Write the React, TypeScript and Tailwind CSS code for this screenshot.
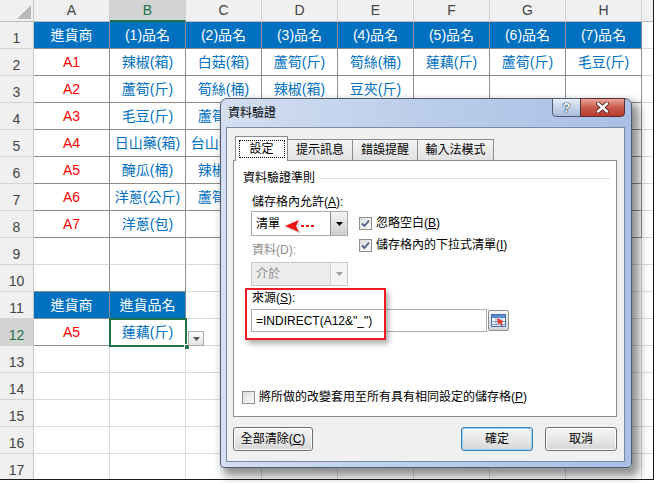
import React from "react";

const LETTERS = ["A", "B", "C", "D", "E", "F", "G", "H"];

const DATA: Record<number, string[]> = {
  1: ["進貨商", "(1)品名", "(2)品名", "(3)品名", "(4)品名", "(5)品名", "(6)品名", "(7)品名"],
  2: ["A1", "辣椒(箱)", "白菇(箱)", "蘆筍(斤)", "筍絲(桶)", "蓮藕(斤)", "蘆筍(斤)", "毛豆(斤)"],
  3: ["A2", "蘆筍(斤)", "筍絲(桶)", "辣椒(箱)", "豆夾(斤)"],
  4: ["A3", "毛豆(斤)", "蘆筍(斤)"],
  5: ["A4", "日山藥(箱)", "台山藥(箱)"],
  6: ["A5", "醃瓜(桶)", "辣椒(箱)"],
  7: ["A6", "洋蔥(公斤)", "蘆筍(斤)"],
  8: ["A7", "洋蔥(包)"],
  11: ["進貨商", "進貨品名"],
  12: ["A5", "蓮藕(斤)"],
};

const inTable = (r: number, c: number) =>
  (r >= 1 && r <= 8 && c >= 0 && c <= 7) || ((r === 11 || r === 12) && c >= 0 && c <= 1);
const sideOnly = (r: number, c: number) => (r === 9 || r === 10) && c >= 0 && c <= 1;
const isHead = (r: number, c: number) => r === 1 || (r === 11 && c <= 1);

function Sheet() {
  const rows = Array.from({ length: 17 }, (_, i) => i + 1);
  return (
    <div className="flex flex-col font-['Liberation_Sans','Noto_Sans_CJK_TC',sans-serif] text-[14px]">
      <div className="flex h-[22px] shrink-0">
        <div className="relative w-[34px] shrink-0 bg-[#f0f0f0] border-r border-b border-r-[#c6c6c6] border-b-[#bdbdbd]">
          <div className="absolute right-[2px] bottom-[2px] w-0 h-0 border-l-[14px] border-l-transparent border-b-[14px] border-b-[#b9b9b9]" />
        </div>
        {LETTERS.map((l, i) => (
          <div
            key={l}
            className={`w-[76px] shrink-0 flex items-center justify-center border-r border-r-[#d0d0d0] ${
              i === 1
                ? "bg-[#d3d3d3] text-[#217346] border-b-2 border-b-[#217346]"
                : "bg-[#f0f0f0] text-[#444] border-b border-b-[#bdbdbd]"
            }`}
          >
            {l}
          </div>
        ))}
        <div className="flex-1 bg-[#f0f0f0] border-b border-b-[#bdbdbd]" />
      </div>
      {rows.map((r) => (
        <div key={r} className="flex h-[27px] shrink-0">
          <div
            className={`w-[34px] shrink-0 flex items-end justify-center pb-[2px] leading-[16px] border-r border-b border-r-[#c6c6c6] border-b-[#d4d4d4] ${
              r === 12 ? "bg-[#d3d3d3] text-[#217346]" : "bg-[#f0f0f0] text-[#444]"
            }`}
          >
            {r}
          </div>
          {LETTERS.map((_, c) => {
            const rDark = inTable(r, c) || inTable(r, c + 1) || sideOnly(r, c);
            const bDark = inTable(r, c) || inTable(r + 1, c);
            const text = DATA[r]?.[c] ?? "";
            const head = inTable(r, c) && isHead(r, c);
            const color = head ? "bg-[#0070c0] text-white" : c === 0 ? "text-[#ff0000]" : "text-[#0070c0]";
            return (
              <div
                key={c}
                className={`w-[76px] shrink-0 flex items-center justify-center whitespace-nowrap overflow-hidden border-r border-b ${
                  rDark ? "border-r-[#8c8c8c]" : "border-r-[#dadada]"
                } ${bDark ? "border-b-[#8c8c8c]" : "border-b-[#dadada]"} ${color}`}
              >
                {text}
              </div>
            );
          })}
          <div className="flex-1 border-b border-b-[#dadada]" />
        </div>
      ))}
    </div>
  );
}

function CheckBox({ checked }: { checked?: boolean }) {
  return (
    <span className="w-[13px] h-[13px] shrink-0 border border-[#8e8f8f] bg-gradient-to-br from-[#dcdcdc] to-[#fbfbfb] flex items-center justify-center">
      {checked && (
        <svg width="9" height="9" viewBox="0 0 9 9">
          <path d="M1 4.5 L3.5 7 L8 1.5" fill="none" stroke="#4a5f86" strokeWidth="1.8" />
        </svg>
      )}
    </span>
  );
}

function DownTri({ color }: { color: string }) {
  return (
    <svg width="7" height="4" viewBox="0 0 7 4">
      <path d="M0 0 H7 L3.5 4 Z" fill={color} />
    </svg>
  );
}

function Btn({ children, cls, def }: { children: React.ReactNode; cls: string; def?: boolean }) {
  return (
    <div
      className={`${cls} h-full rounded-[3px] border flex items-center justify-center bg-gradient-to-b from-[#f6f6f6] via-[#e8e8e8] to-[#d6d6d6] ${
        def ? "border-[#3c7fb1] shadow-[inset_0_0_0_1px_#8fd3f5]" : "border-[#707070] shadow-[inset_0_0_0_1px_#fcfcfc]"
      }`}
    >
      {children}
    </div>
  );
}

function Panel() {
  return (
    <div className="relative h-[257px] bg-white border border-[#898c95] flex flex-col">
      <div className="mt-[9px] h-[16px] flex items-center">
        <span className="ml-[9px] leading-[16px]">資料驗證準則</span>
        <span className="flex-1 ml-[4px] mr-[6px] h-px bg-[#d5dfe5]" />
      </div>
      <div className="mt-[8px] h-[16px] leading-[16px] ml-[18px]">
        儲存格內允許(<span className="underline">A</span>):
      </div>
      <div className="flex">
        <div className="ml-[17px] w-[97px] flex flex-col">
          <div className="relative mt-[1px] h-[25px] border border-[#a6abb3] bg-white flex">
            <div className="flex-1 flex items-center pl-[4px]">清單</div>
            <div className="w-[17px] h-full border-l border-[#8e8f8f] bg-gradient-to-b from-[#f4f4f4] to-[#cfcfcf] flex items-center justify-center">
              <DownTri color="#000" />
            </div>
            <svg className="absolute left-[32px] top-[6px]" width="32" height="16" viewBox="0 0 32 16">
              <path d="M3 10 L17 4 L14 10 L17 16 Z" fill="#000" opacity="0.15" />
              <path d="M1 8 L15 2 L12 8 L15 14 Z" fill="#ee1111" />
              <rect x="17" y="7" width="3" height="2" fill="#ee1111" />
              <rect x="22" y="7" width="3" height="2" fill="#ee1111" />
              <rect x="27" y="7" width="3" height="2" fill="#ee1111" />
            </svg>
          </div>
          <div className="mt-[6px] h-[16px] leading-[16px] ml-[1px] text-[#8d8d8d]">資料(D):</div>
          <div className="mt-[4px] h-[24px] border border-[#c8c8c8] bg-[#ececec] flex">
            <div className="flex-1 flex items-center pl-[4px] text-[#8d8d8d]">介於</div>
            <div className="w-[17px] h-full border-l border-[#d0d0d0] bg-[#f4f4f4] flex items-center justify-center">
              <DownTri color="#a0a0a0" />
            </div>
          </div>
        </div>
        <div className="ml-[11px] pt-[5px] flex flex-col gap-[6px]">
          <div className="h-[16px] flex items-center gap-[4px]">
            <CheckBox checked />
            <span className="leading-[16px]">
              忽略空白(<span className="underline">B</span>)
            </span>
          </div>
          <div className="h-[16px] flex items-center gap-[4px]">
            <CheckBox checked />
            <span className="leading-[16px]">
              儲存格內的下拉式清單(<span className="underline">I</span>)
            </span>
          </div>
        </div>
      </div>
      <div className="mt-[4px] h-[16px] leading-[16px] ml-[18px]">
        來源(<span className="underline">S</span>):
      </div>
      <div className="mt-[3px] flex">
        <div className="ml-[17px] w-[236px] h-[23px] border border-[#abadb3] bg-white flex items-center pl-[4px]">
          =INDIRECT(A12&amp;"_")
        </div>
        <div className="ml-[1px] mt-[1px] w-[21px] h-[21px] rounded-[2px] border border-[#8e8f8f] bg-gradient-to-b from-[#f6f6f6] to-[#d4d4d4] flex items-center justify-center">
          <svg width="15" height="13" viewBox="0 0 15 13">
            <rect x="0.5" y="0.5" width="14" height="12" fill="#eef3fb" stroke="#4a72b0" />
            <rect x="1" y="1" width="13" height="3" fill="#5d8ad0" />
            <path d="M1 7.5H14M1 10.5H14M5 4V12M10 4V12" stroke="#8aa9d8" strokeWidth="1" />
            <path d="M6 4 L13 7.5 L10.5 8.5 L12 11.5 L10.5 12 L9 9 L7 10.5 Z" fill="#e23b2e" />
          </svg>
        </div>
      </div>
      <div className="mt-[57px] h-[16px] ml-[8px] flex items-center gap-[4px]">
        <CheckBox />
        <span className="leading-[16px]">
          將所做的改變套用至所有具有相同設定的儲存格(<span className="underline">P</span>)
        </span>
      </div>
      <div className="absolute left-[11px] top-[127px] w-[141px] h-[52px] border-2 border-[#ed1c24] shadow-[3px_4px_5px_rgba(0,0,0,0.3)]" />
    </div>
  );
}

function Dialog() {
  return (
    <div className="absolute left-[220px] top-[98px] w-[412px] h-[370px] rounded-t-[7px] rounded-b-[4px] border border-[#505b6b] bg-gradient-to-r from-[#d3dff1] via-[#bacdea] to-[#a9bfe6] shadow-[5px_6px_10px_2px_rgba(0,0,0,0.45)] flex flex-col font-['Liberation_Sans','Noto_Sans_CJK_TC',sans-serif] text-[12px] text-black">
      <div className="h-[28px] shrink-0 flex items-center pl-[7px] leading-none">資料驗證</div>
      <div className="absolute top-[-1px] right-[6px] flex h-[19px]">
        <div className="w-[29px] h-full rounded-bl-[4px] border border-[#4f5b6e] bg-gradient-to-b from-[#e6edf7] via-[#c5d4ea] to-[#a7bbdb] flex items-center justify-center">
          <span className="text-[13px] font-bold text-white leading-none [text-shadow:0_0_1px_#1e2a40,0_0_1px_#1e2a40,0_0_1px_#1e2a40]">?</span>
        </div>
        <div className="w-[45px] h-full -ml-px rounded-br-[4px] border border-[#5a2e2e] bg-gradient-to-b from-[#e9a699] via-[#c95a4c] to-[#b8392b] flex items-center justify-center">
          <svg width="13" height="11" viewBox="0 0 13 11">
            <path d="M2 1.5 L11 9.5 M11 1.5 L2 9.5" stroke="#3a1a1a" strokeWidth="4" strokeLinecap="round" />
            <path d="M2 1.5 L11 9.5 M11 1.5 L2 9.5" stroke="#fff" strokeWidth="2.4" strokeLinecap="round" />
          </svg>
        </div>
      </div>
      <div className="ml-[5px] mr-[6px] mb-[5px] flex-1 border border-[#7b8aa3] bg-[#f0f0f0] flex flex-col">
        <div className="ml-[6px] mt-[8px] w-[384px] flex flex-col">
          <div className="relative z-10 -mb-px h-[25px] flex items-end pl-[2px]">
            <div className="w-[53px] h-[25px] bg-white border border-b-0 border-[#898c95] flex items-center justify-center">
              <span className="w-[46px] h-[18px] border border-dotted border-black flex items-center justify-center">設定</span>
            </div>
            <div className="w-[65px] h-[21px] mb-px border border-l-0 border-b-0 border-[#898c95] bg-gradient-to-b from-[#f4f4f4] to-[#e2e2e2] flex items-center justify-center">提示訊息</div>
            <div className="w-[65px] h-[21px] mb-px border border-l-0 border-b-0 border-[#898c95] bg-gradient-to-b from-[#f4f4f4] to-[#e2e2e2] flex items-center justify-center">錯誤提醒</div>
            <div className="w-[76px] h-[21px] mb-px border border-l-0 border-b-0 border-[#898c95] bg-gradient-to-b from-[#f4f4f4] to-[#e2e2e2] flex items-center justify-center">輸入法模式</div>
          </div>
          <Panel />
          <div className="mt-[10px] h-[24px] flex">
            <Btn cls="w-[80px]">
              全部清除(<span className="underline">C</span>)
            </Btn>
            <div className="flex-1" />
            <Btn cls="w-[72px]" def>
              確定
            </Btn>
            <Btn cls="w-[72px] ml-[12px]">取消</Btn>
          </div>
        </div>
      </div>
    </div>
  );
}

export default function App() {
  return (
    <div className="relative w-[656px] h-[483px] bg-white overflow-hidden">
      <div className="w-[654px] h-[480px] border-r border-b border-[#1a1a1a] overflow-hidden">
        <Sheet />
      </div>
      {/* selected cell B12 */}
      <div className="absolute left-[109px] top-[318px] w-[78px] h-[29px] border-2 border-[#217346]" />
      <div className="absolute left-[184px] top-[344px] w-[6px] h-[6px] bg-[#217346] border border-white" />
      <div className="absolute left-[188px] top-[331px] w-[16px] h-[15px] border border-[#ababab] bg-gradient-to-b from-white to-[#e2e2e2] flex items-center justify-center">
        <DownTri color="#555" />
      </div>
      <Dialog />
    </div>
  );
}
